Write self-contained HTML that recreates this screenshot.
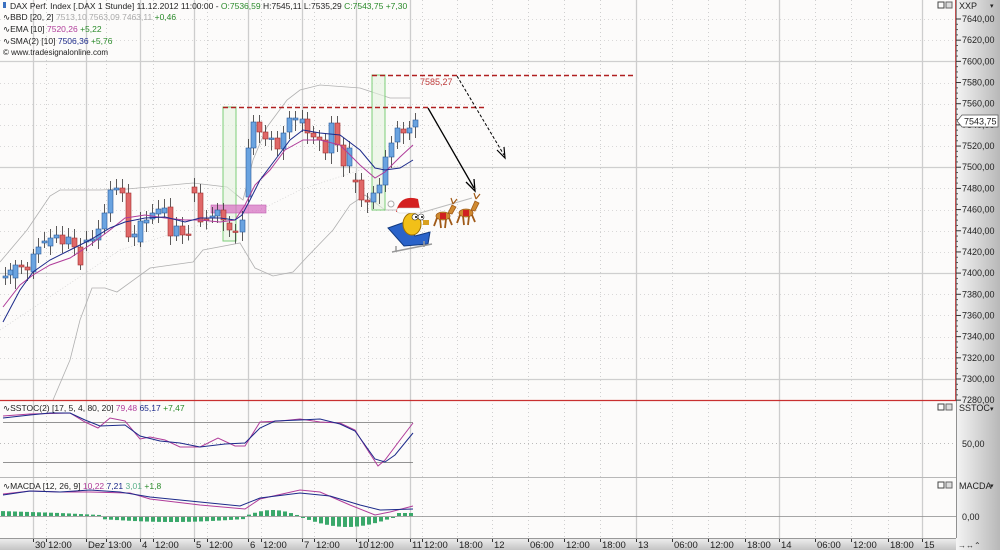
<!DOCTYPE html>
<html><head><meta charset="utf-8"><style>
html,body{margin:0;padding:0;width:1000px;height:550px;overflow:hidden;background:#fcfbfa;font-family:"Liberation Sans",sans-serif}
svg{position:absolute;left:0;top:0}
</style></head><body>
<svg id="s" width="1000" height="550" viewBox="0 0 1000 550" font-family="Liberation Sans, sans-serif">
<defs>
<linearGradient id="ax" x1="0" x2="1" y1="0" y2="0"><stop offset="0" stop-color="#f4f4f4"/><stop offset="1" stop-color="#b8b8b8"/></linearGradient>
<linearGradient id="tx" x1="0" x2="0" y1="0" y2="1"><stop offset="0" stop-color="#f0f0f0"/><stop offset="1" stop-color="#c4c4c4"/></linearGradient>
</defs>
<rect x="0" y="0" width="956" height="538" fill="#fcfbfa"/>
<g id="grid"></g>
<polyline fill="none" stroke="#b0b0b0" stroke-width="0.8" points="0,262 27,230 50,196 60,190 100,190 127,189 193,183 227,187 243,200 253,160 267,127 287,100 300,90 320,85 360,88 390,98 410,98"/>
<polyline fill="none" stroke="#b0b0b0" stroke-width="0.8" points="53,400 70,360 80,320 92,288 105,288 117,292 150,268 193,262 203,250 240,243 255,268 273,276 293,272 307,257 333,230 350,205 365,195 385,210 410,210"/>
<polyline fill="none" stroke="#cfcfcf" stroke-width="0.7" stroke-dasharray="1,2" points="0,330 60,290 120,250 200,225 260,210 300,190 360,170 410,165"/>
<rect x="223" y="107" width="13" height="134" fill="#e4f3e0" fill-opacity="0.6" stroke="#7ccf78" stroke-width="1"/>
<rect x="372" y="75" width="13" height="135" fill="#e4f3e0" fill-opacity="0.6" stroke="#7ccf78" stroke-width="1"/>
<rect x="211" y="205" width="55" height="8" fill="#d876c4" fill-opacity="0.75" stroke="#c060b0" stroke-width="0.6"/>
<g id="candles"></g>
<polyline fill="none" stroke="#b03c9a" stroke-width="1" points="3,307 20,285 33,275 50,265 70,258 90,245 110,230 125,218 145,215 165,218 185,220 200,220 220,222 235,220 245,205 255,185 270,170 285,150 303,140 320,140 340,145 360,165 375,178 385,172 400,157 413,145"/>
<polyline fill="none" stroke="#1c2a8a" stroke-width="1" points="3,322 20,290 33,272 50,260 70,250 90,240 110,228 125,222 145,218 165,217 185,222 200,218 220,218 235,220 242,215 250,200 260,180 275,160 290,140 303,130 320,133 340,135 360,150 375,168 385,170 400,168 413,160"/>
<line x1="372" y1="75.5" x2="635" y2="75.5" stroke="#b02020" stroke-width="1.5" stroke-dasharray="5,3"/>
<line x1="223" y1="107.5" x2="485" y2="107.5" stroke="#b02020" stroke-width="1.5" stroke-dasharray="5,3"/>
<text x="420" y="85" font-size="9" fill="#c04040">7585,27</text>
<line x1="428" y1="108" x2="474" y2="188" stroke="#000" stroke-width="1.3"/>
<polyline points="466,182 475,191 474,179" fill="none" stroke="#000" stroke-width="1.3"/>
<line x1="457" y1="76" x2="504" y2="155" stroke="#000" stroke-width="1" stroke-dasharray="3,2"/>
<polyline points="497,150 505,158 504,147" fill="none" stroke="#000" stroke-width="1.2"/>
<!-- santa -->
<g>
<line x1="420" y1="213" x2="472" y2="198" stroke="#bbb"/>
<polygon points="388,228 405,222 415,236 430,232 428,244 404,246" fill="#2a63c9" stroke="#123a80"/>
<path d="M392,252 L432,244 M396,246 L396,252 M424,241 L424,247" stroke="#999" stroke-width="1.5" fill="none"/>
<ellipse cx="412" cy="224" rx="9" ry="11" fill="#f2c018" stroke="#a07000"/>
<path d="M396,212 Q400,194 418,199 L420,210 Z" fill="#d42020"/>
<rect x="397" y="208" width="24" height="5" rx="2" fill="#fff" stroke="#ccc" stroke-width="0.5"/>
<circle cx="391" cy="204" r="3" fill="#fff" stroke="#aaa"/>
<circle cx="415" cy="217" r="3" fill="#fff" stroke="#333" stroke-width="0.6"/><circle cx="421" cy="217" r="3" fill="#fff" stroke="#333" stroke-width="0.6"/>
<circle cx="416" cy="217" r="1" fill="#000"/><circle cx="422" cy="217" r="1" fill="#000"/>
<rect x="423" y="220" width="6" height="5" fill="#d8a020"/>
<g fill="#d08a30" stroke="#a05a18" stroke-width="0.8">
<ellipse cx="443" cy="216" rx="7" ry="4"/>
<path d="M437,218 l-3,8 M440,219 l1,9 M446,219 l-1,9 M449,218 l3,7" fill="none" stroke-width="1.8"/>
<path d="M448,213 l4,-8 l4,2 l-4,7 Z"/>
<ellipse cx="466" cy="213" rx="7" ry="4"/>
<path d="M460,215 l-3,8 M463,216 l1,9 M469,216 l-1,9 M472,215 l3,7" fill="none" stroke-width="1.8"/>
<path d="M471,210 l4,-9 l4,2 l-4,8 Z"/>
</g>
<rect x="440" y="213" width="6" height="6" fill="#d02020"/><rect x="463" y="210" width="6" height="6" fill="#d02020"/>
<path d="M453,204 l-2,-6 m2,6 l4,-5 M476,199 l-2,-6 m2,6 l4,-5" stroke="#a05a18" stroke-width="1.2" fill="none"/>
</g>
<line x1="0" y1="400.5" x2="956" y2="400.5" stroke="#c83030" stroke-width="1.2"/>
<line x1="955.5" y1="0" x2="955.5" y2="400" stroke="#c05050" stroke-width="1"/>
<line x1="0" y1="477.5" x2="956" y2="477.5" stroke="#b8b8b8" stroke-width="1"/>
<line x1="3" y1="422.5" x2="413" y2="422.5" stroke="#707070" stroke-width="0.8"/>
<line x1="3" y1="462.5" x2="413" y2="462.5" stroke="#707070" stroke-width="0.8"/>
<polyline fill="none" stroke="#b03c9a" stroke-width="1" points="3,416 30,414 70,413 85,422 98,428 110,418 125,421 140,439 150,437 165,440 180,447 200,447 218,438 235,446 245,446 260,422 280,421 300,419 320,422 340,423 355,430 365,446 378,466 385,460 400,440 413,423"/>
<polyline fill="none" stroke="#1c2a8a" stroke-width="1" points="3,418 30,415 50,413 70,413 85,420 100,426 125,425 140,436 160,441 180,443 200,447 225,444 245,443 260,428 275,421 300,420 320,419 340,424 355,431 365,445 375,459 385,462 395,455 413,433"/>
<line x1="0" y1="516.5" x2="956" y2="516.5" stroke="#8a8a8a" stroke-width="0.8"/>
<g id="hist"></g>
<polyline fill="none" stroke="#b03c9a" stroke-width="1" points="3,494 30,491 60,492 90,492 130,493 150,499 200,505 245,509 260,499 300,490 320,492 350,505 375,515 390,512 413,506"/>
<polyline fill="none" stroke="#1c2a8a" stroke-width="1" points="3,495 30,491 60,492 90,490 120,492 150,497 180,500 200,502 240,506 260,498 300,493 330,496 360,505 380,510 413,509"/>
<rect x="956" y="0" width="44" height="550" fill="url(#ax)"/>
<line x1="956.5" y1="0" x2="956.5" y2="538" stroke="#777" stroke-width="0.8"/>
<g id="ticks"></g>
<rect x="0" y="538" width="956" height="12" fill="url(#tx)"/>
<line x1="0" y1="538.5" x2="956" y2="538.5" stroke="#999"/>
<g id="tlab" font-size="9.5" fill="#222"></g>
<g font-size="8.5" fill="#222">
<rect x="3" y="2" width="3" height="6" fill="#3a70c0"/>
<text x="10" y="9">DAX Perf. Index [.DAX  1 Stunde] 11.12.2012 11:00:00 - <tspan fill="#2a8a2a">O:7536,59</tspan> H:7545,11 L:7535,29 <tspan fill="#2a8a2a">C:7543,75 +7,30</tspan></text>
<text x="3" y="20">∿BBD [20, 2] <tspan fill="#aaa">7513,10 7563,09 7463,11</tspan> <tspan fill="#2a8a2a">+0,46</tspan></text>
<text x="3" y="32">∿EMA [10] <tspan fill="#b03c9a">7520,26</tspan> <tspan fill="#2a8a2a">+5,22</tspan></text>
<text x="3" y="44">∿SMA(2) [10] <tspan fill="#1c2a8a">7506,36</tspan> <tspan fill="#2a8a2a">+5,76</tspan></text>
<text x="3" y="55" font-size="8">© www.tradesignalonline.com</text>
<text x="3" y="411">∿SSTOC(2) [17, 5, 4, 80, 20] <tspan fill="#b03c9a">79,48</tspan> <tspan fill="#1c2a8a">65,17</tspan> <tspan fill="#2a8a2a">+7,47</tspan></text>
<text x="3" y="489">∿MACDA [12, 26, 9] <tspan fill="#b03c9a">10,22</tspan> <tspan fill="#1c2a8a">7,21</tspan> <tspan fill="#5ab08a">3,01</tspan> <tspan fill="#2a8a2a">+1,8</tspan></text>
</g>
<g font-size="9" fill="#222">
<text x="959" y="9">XXP</text><text x="959" y="411">SSTOC</text><text x="959" y="489">MACDA</text>
<text x="990" y="8" font-size="7">▾</text><text x="990" y="411" font-size="7">▾</text><text x="990" y="488" font-size="7">▾</text>
<text x="962" y="447">50,00</text><text x="962" y="520">0,00</text>
</g>
<g fill="#555"><rect x="938" y="2" width="6" height="6" fill="none" stroke="#444"/><rect x="946" y="2" width="6" height="6" fill="#ddd" stroke="#666"/>
<rect x="938" y="404" width="6" height="6" fill="none" stroke="#444"/><rect x="946" y="404" width="6" height="6" fill="#ddd" stroke="#666"/>
<rect x="938" y="482" width="6" height="6" fill="none" stroke="#444"/><rect x="946" y="482" width="6" height="6" fill="#ddd" stroke="#666"/></g>
<polygon points="957,121 962,115 998,115 998,127 962,127" fill="#fff" stroke="#555" stroke-width="0.7"/>
<text x="964" y="124.5" font-size="9" fill="#222">7543,75</text>
<text x="958" y="548" font-size="8" fill="#333">→↔⌃</text>
</svg>
<script>
var NS="http://www.w3.org/2000/svg";
function el(p,t,a){var e=document.createElementNS(NS,t);for(var k in a)e.setAttribute(k,a[k]);p.appendChild(e);return e;}
var g=document.getElementById('grid');
function yp(p){return 19+(7640-p)*1.0588;}
for(var p=7280;p<=7640;p+=20){var y=Math.round(yp(p))+0.5;var solid=(p%100==0);
 el(g,'line',{x1:0,x2:955,y1:y,y2:y,stroke:solid?'#cfcfcf':'#cdcdcd','stroke-width':solid?1.2:0.8,'stroke-dasharray':solid?'':'1,3'});}
[443].forEach(function(y){el(g,'line',{x1:0,x2:955,y1:y+.5,y2:y+.5,stroke:'#bbb','stroke-dasharray':'1,3'})});
var solids=[33,86,140,194,248,302,356,410,636,779,922];
var dashed=[46,106,153,207,261,314,368,422,457,492,528,564,600,672,708,745,815,851,888];
solids.forEach(function(x){el(g,'line',{x1:x+.5,x2:x+.5,y1:0,y2:538,stroke:'#cdcdcd','stroke-width':1.3});});
dashed.forEach(function(x){el(g,'line',{x1:x+.5,x2:x+.5,y1:0,y2:538,stroke:'#cfcfcf','stroke-dasharray':'1,3'});});
var c=[[5,278,276],[10,275,270],[15,278,265],[21,265,267],[27,267,270],[33,272,254],[38,254,247],[44,243,241],[50,246,238],[56,238,235],[62,235,244],[68,244,237],[74,238,247],[80,247,265],[86,242,240],[92,241,239],[98,240,229],[104,229,213],[110,213,190],[116,190,188],[122,188,193],[128,193,237],[134,237,234],[140,242,221],[146,223,220],[152,219,213],[158,214,209],[164,213,208],[170,207,236],[176,236,226],[182,226,235],[188,234,234],[194,187,193],[200,193,222],[206,219,219],[212,218,216],[217,216,210],[223,210,220],[229,223,230],[235,231,231],[242,232,220],[248,197,148],[253,148,122],[259,122,132],[265,132,139],[271,139,138],[277,138,149],[283,149,133],[289,132,118],[295,120,118],[302,123,119],[307,119,133],[313,133,137],[319,137,140],[325,140,153],[331,153,123],[337,123,145],[343,145,166],[349,166,148],[355,180,182],[361,180,200],[367,200,202],[373,202,193],[379,193,185],[385,185,157],[391,157,143],[397,142,128],[403,129,133],[409,133,128],[415,127,120]];
var cg=document.getElementById('candles');
c.forEach(function(d){var x=d[0],o=d[1],cl=d[2];var up=cl<o;var t=Math.min(o,cl),b=Math.max(o,cl);if(b-t<1.5){b=t+1.5;}
 el(cg,'line',{x1:x+.5,x2:x+.5,y1:t-5-(x%3)*2,y2:b+5+(x%4)*2,stroke:'#333','stroke-width':0.8});
 el(cg,'rect',{x:x-2,y:t,width:5,height:b-t,fill:up?'#6aa3e0':'#e06868',stroke:up?'#2a5a9a':'#a03030','stroke-width':0.6});});
var hg=document.getElementById('hist');
for(var x=3;x<=413;x+=6){var v;
 if(x<60)v=5-(x/60)*2;else if(x<100)v=3-(x-60)/20;else if(x<245)v=-2-3*Math.sin((x-100)/145*Math.PI);else if(x<300)v=6*Math.sin((x-245)/55*Math.PI);else if(x<395)v=-10*Math.sin((x-300)/95*Math.PI);else v=3;
 var y=516,h=Math.abs(v);el(hg,'rect',{x:x-2,y:v>0?y-h:y+1,width:4,height:Math.max(h,1),fill:'#3aa86a'});}
var tk=document.getElementById('ticks');
for(var p=7280;p<=7640;p+=20){var y=yp(p);el(tk,'line',{x1:956,x2:961,y1:y,y2:y,stroke:'#333'});
 var t=el(tk,'text',{x:962,y:y+3,'font-size':9,fill:'#222'});t.textContent=p+',00';}
for(var p=7285;p<=7640;p+=5){if(p%20==0)continue;var y=yp(p);el(tk,'line',{x1:956,x2:958,y1:y,y2:y,stroke:'#555'});}
var tl=document.getElementById('tlab');
var labs=[[33,'30'],[46,'12:00'],[86,'Dez'],[106,'13:00'],[140,'4'],[153,'12:00'],[194,'5'],[207,'12:00'],[248,'6'],[261,'12:00'],[302,'7'],[314,'12:00'],[356,'10'],[368,'12:00'],[410,'11'],[422,'12:00'],[457,'18:00'],[492,'12'],[528,'06:00'],[564,'12:00'],[600,'18:00'],[636,'13'],[672,'06:00'],[708,'12:00'],[745,'18:00'],[779,'14'],[815,'06:00'],[851,'12:00'],[888,'18:00'],[922,'15']];
labs.forEach(function(l){el(tl,'line',{x1:l[0]+.5,x2:l[0]+.5,y1:539,y2:542,stroke:'#333'});var t=el(tl,'text',{x:l[0]+2,y:548});t.textContent=l[1];});
</script>
</body></html>
